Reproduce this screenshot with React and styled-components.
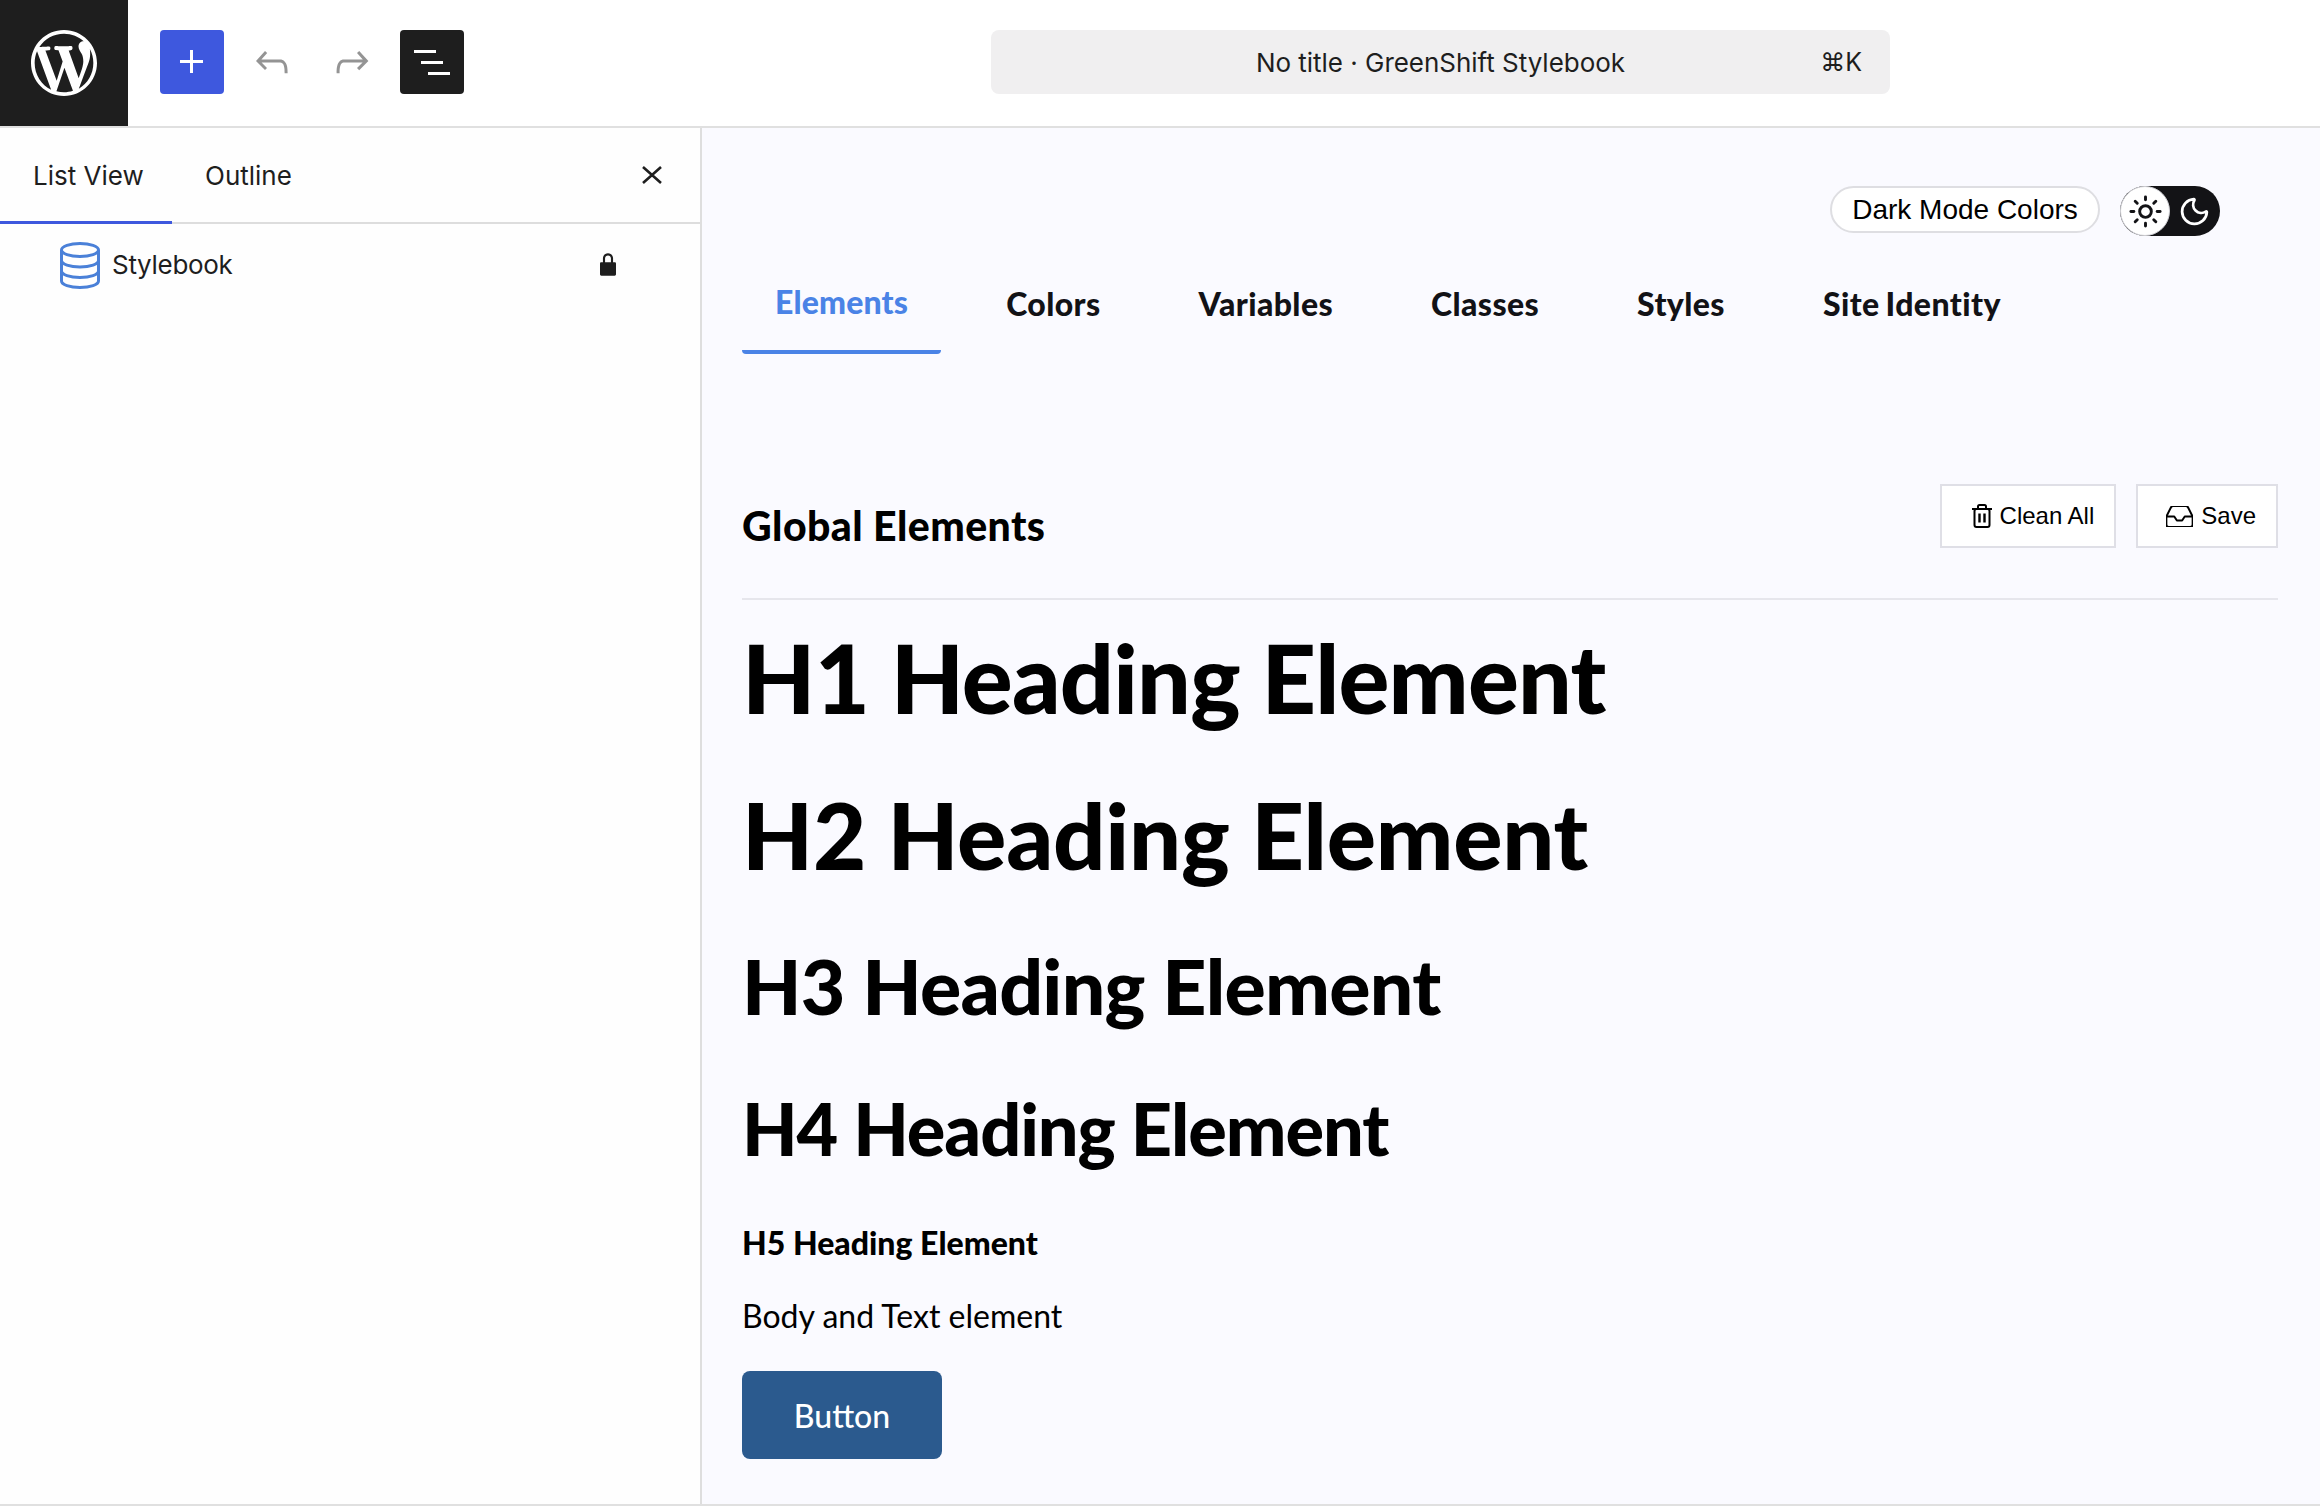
import styled, { createGlobalStyle } from 'styled-components';
import { Sun, Moon } from 'lucide-react';

const GlobalStyle = createGlobalStyle`
  * { box-sizing: border-box; }
  html, body { margin: 0; padding: 0; background: #fff; }
  body { font-family: Inter, "Liberation Sans", sans-serif; color: #1e1e1e; }
`

const Frame = styled.div`
  width: 2320px;
  height: 1508px;
  display: flex;
  flex-direction: column;
  overflow: hidden;
  background: #fff;
`

const TopBar = styled.header`
  height: 128px;
  flex: none;
  display: flex;
  align-items: flex-start;
  border-bottom: 2px solid #e0e0e0;
`

const LogoBox = styled.div`
  width: 128px;
  height: 126px;
  background: #1e1e1e;
  display: flex;
  align-items: center;
  justify-content: center;
  svg { display: block; }
`

const Tools = styled.div`
  display: flex;
  gap: 16px;
  padding: 30px 0 0 32px;
`

const ToolButton = styled.button`
  width: 64px;
  height: 64px;
  padding: 0;
  border: 0;
  border-radius: 4px;
  display: flex;
  align-items: center;
  justify-content: center;
  background: ${p => (p.$variant === 'blue' ? '#3e58de' : p.$variant === 'dark' ? '#1e1e1e' : 'transparent')};
  color: ${p => (p.$variant ? '#fff' : '#949494')};
`

const SearchBar = styled.div`
  position: relative;
  width: 899px;
  height: 64px;
  margin: 30px 0 0 527px;
  background: #f0eff0;
  border-radius: 8px;
  display: flex;
  align-items: center;
  justify-content: center;
  font-size: 26px;
  letter-spacing: -0.03px;
  color: #1e1e1e;
`

const Shortcut = styled.span`
  position: absolute;
  right: 28px;
  top: 50%;
  transform: translateY(-50%);
  font-size: 25px;
`

const Body = styled.div`
  height: 1378px;
  flex: none;
  display: flex;
  border-bottom: 2px solid #e0e0e0;
`

const Sidebar = styled.aside`
  width: 702px;
  flex: none;
  background: #fefefe;
  border-right: 2px solid #dedede;
`

const SideTabs = styled.div`
  height: 96px;
  display: flex;
  align-items: stretch;
  padding-right: 38px;
  border-bottom: 2px solid #dddddd;
`

const SideTab = styled.div`
  display: flex;
  align-items: center;
  padding: 2px 33px 0;
  width: ${p => (p.$active ? '172px' : 'auto')};
  margin-bottom: -2px;
  font-size: 26px;
  white-space: nowrap;
  color: #1e1e1e;
  border-bottom: 3px solid ${p => (p.$active ? '#3e58de' : 'transparent')};
`

const CloseButton = styled.div`
  margin: 0 0 1px auto;
  display: flex;
  align-items: center;
  color: #1e1e1e;
`

const TreeRow = styled.div`
  display: flex;
  align-items: center;
  gap: 12px;
  padding: 16px 76px 0 60px;
  font-size: 26px;
  letter-spacing: -0.3px;
  line-height: 50px;
  color: #1e1e1e;
`

const LockIcon = styled.svg`
  margin-left: auto;
  color: #1e1e1e;
`

const Main = styled.main`
  flex: 1;
  min-width: 0;
  background: #fafaff;
  padding: 58px 42px 0 40px;
`

const ModeRow = styled.div`
  display: flex;
  justify-content: flex-end;
  align-items: flex-start;
  gap: 20px;
  padding-right: 58px;
`

const ModePill = styled.div`
  width: 270px;
  height: 47px;
  border: 2px solid #dedee2;
  border-radius: 24px;
  background: #fff;
  display: flex;
  align-items: center;
  justify-content: center;
  font-family: "Liberation Sans", Arial, sans-serif;
  font-size: 28px;
  color: #000;
`

const ModeToggle = styled.div`
  position: relative;
  width: 100px;
  height: 50px;
  border-radius: 25px;
  background: #131316;
  display: flex;
  align-items: center;
  justify-content: flex-end;
  padding-right: 9px;
  color: #fff;
`

const ToggleKnob = styled.div`
  position: absolute;
  left: 0;
  top: 0;
  width: 50px;
  height: 50px;
  border-radius: 50%;
  background: #fff;
  border: 1px solid #cfcfd4;
  display: flex;
  align-items: center;
  justify-content: center;
  color: #131316;
`

const NavRow = styled.nav`
  display: flex;
  gap: 32px;
  margin-top: 43px;
  height: 75px;
  font-family: Lato, "Open Sans", sans-serif;
`

const NavItem = styled.div`
  padding: ${p => (p.$active ? '4px 33px 0' : '6px 33px 0')};
  height: 75px;
  font-size: 32px;
  line-height: 38px;
  font-weight: 900;
  letter-spacing: ${p => (p.$active ? '0.15px' : '0.4px')};
  word-spacing: -2px;
  color: ${p => (p.$active ? '#4a83e6' : '#121216')};
  border-bottom: 4px solid ${p => (p.$active ? '#4a83e6' : 'transparent')};
  border-radius: 0 0 4px 4px;
`

const SectionHead = styled.div`
  display: flex;
  justify-content: space-between;
  align-items: flex-start;
  margin-top: 130px;
  padding-bottom: 50px;
  border-bottom: 2px solid #e6e6ec;
`

const SectionTitle = styled.h2`
  margin: 18px 0 0;
  height: 46px;
  font-family: Lato, sans-serif;
  font-size: 41px;
  line-height: 48px;
  font-weight: 900;
  letter-spacing: 0.4px;
  color: #000;
`

const Actions = styled.div`
  display: flex;
  gap: 20px;
`

const ActionButton = styled.button`
  height: 64px;
  padding: 0 20px 0 ${p => p.$left}px;
  display: flex;
  align-items: center;
  gap: 8px;
  background: #fff;
  border: 2px solid #dfdfe6;
  font-family: "Liberation Sans", Arial, sans-serif;
  font-size: 24px;
  color: #000;
`

const H1 = styled.h1`
  margin: 20px 0 0;
  font-family: Lato, sans-serif;
  font-size: 95px;
  line-height: 114px;
  font-weight: 900;
  letter-spacing: -0.82px;
  color: #000;
`

const H2 = styled(H1).attrs({ as: 'h2' })`
  margin-top: 46px;
  font-size: 92px;
  line-height: 110px;
  letter-spacing: -0.25px;
`

const H3 = styled(H1).attrs({ as: 'h3' })`
  margin-top: 49px;
  font-size: 77px;
  line-height: 92px;
  letter-spacing: -0.74px;
`

const H4 = styled(H1).attrs({ as: 'h4' })`
  margin-top: 54px;
  font-size: 72px;
  line-height: 86px;
  letter-spacing: -1.07px;
`

const H5 = styled(H1).attrs({ as: 'h5' })`
  margin-top: 53px;
  font-size: 32px;
  line-height: 38px;
  letter-spacing: 0;
`

const BodyText = styled.p`
  margin: 35px 0 0;
  font-family: Lato, sans-serif;
  font-size: 32px;
  line-height: 38px;
  color: #000;
`

const PrimaryButton = styled.button`
  display: block;
  width: 200px;
  height: 88px;
  margin-top: 36px;
  padding: 0;
  border: 0;
  border-radius: 8px;
  background: #2b5a8e;
  color: #fff;
  font-family: Lato, sans-serif;
  font-size: 32px;
  font-weight: 500;
`

function WpLogo() {
  return (
    <svg width="66" height="66" viewBox="0 0 20 20" fill="#fff">
      <path d="M20 10c0-5.51-4.49-10-10-10C4.48 0 0 4.49 0 10c0 5.52 4.48 10 10 10 5.51 0 10-4.48 10-10zM7.78 15.37L4.37 6.22c.55-.02 1.17-.08 1.17-.08.5-.06.44-1.13-.06-1.11 0 0-1.45.11-2.37.11-.18 0-.37 0-.58-.01C4.12 2.69 6.87 1.11 10 1.11c2.33 0 4.45.87 6.05 2.34-.68-.11-1.65.39-1.65 1.58 0 .74.45 1.36.9 2.1.35.61.55 1.36.55 2.46 0 1.49-1.4 5-1.4 5l-3.03-8.37c.54-.02.82-.17.82-.17.5-.05.44-1.25-.06-1.22 0 0-1.44.12-2.38.12-.87 0-2.33-.12-2.33-.12-.5-.03-.56 1.2-.06 1.22l.92.08 1.26 3.41zM17.41 10c.24-.64.74-1.87.43-4.25.7 1.29 1.05 2.71 1.05 4.25 0 3.29-1.73 6.24-4.4 7.78.97-2.59 1.94-5.2 2.92-7.78zM6.1 18.09C3.12 16.65 1.11 13.53 1.11 10c0-1.3.23-2.48.72-3.59C3.25 10.3 4.67 14.2 6.1 18.09zm4.03-6.63l2.58 6.98c-.86.29-1.76.45-2.71.45-.79 0-1.57-.11-2.29-.33.81-2.38 1.62-4.74 2.42-7.1z" />
    </svg>
  );
}

function GbIcon({ d, size = 48 }) {
  return (
    <svg width={size} height={size} viewBox="0 0 24 24" fill="currentColor">
      <path d={d} />
    </svg>
  );
}

function CloseIcon() {
  return (
    <svg width="20" height="18" viewBox="0 0 20 18" fill="none" stroke="currentColor" strokeWidth="2.600">
      <path d="M1 1l18 16M19 1L1 17" />
    </svg>
  );
}

function DatabaseIcon() {
  return (
    <svg width="40" height="47" viewBox="0 0 40 47" fill="none" stroke="#4a80d8" strokeWidth="3">
      <ellipse cx="20" cy="8" rx="18.5" ry="6.5" />
      <path d="M1.5 8v31c0 3.6 8.3 6.5 18.5 6.5s18.500-2.900 18.500-6.500V8" />
      <path d="M1.500 18.500c0 3.600 8.300 6.500 18.500 6.500s18.500-2.900 18.500-6.500" />
      <path d="M1.500 29c0 3.600 8.300 6.500 18.500 6.500s18.500-2.900 18.500-6.500" />
    </svg>
  );
}

function TrashIcon() {
  return (
    <svg width="20" height="24" viewBox="0 0 20 24" fill="none" stroke="#000" strokeWidth="2">
      <path d="M0 5h20" />
      <path d="M6 5V2.500C6 1.700 6.700 1 7.500 1h5c.8 0 1.500.7 1.500 1.500V5" />
      <rect x="2.500" y="5" width="15" height="18" rx="2" />
      <path d="M7.500 9.500v9M12.500 9.500v9" strokeWidth="2.400" />
    </svg>
  );
}

function InboxIcon() {
  return (
    <svg width="27" height="21" viewBox="2 4 20 16" fill="none" stroke="#000" strokeWidth="1.500" strokeLinejoin="round" strokeLinecap="round">
      <path d="M22 12h-6l-2 3h-4l-2-3H2" />
      <path d="M5.450 5.110 2 12v6a2 2 0 0 0 2 2h16a2 2 0 0 0 2-2v-6l-3.450-6.890A2 2 0 0 0 16.760 4H7.240a2 2 0 0 0-1.790 1.110z" />
    </svg>
  );
}

const navItems = ['Colors', 'Variables', 'Classes', 'Styles', 'Site Identity'];

export default function App() {
  return (
    <Frame>
      <GlobalStyle />
      <TopBar>
        <LogoBox><WpLogo /></LogoBox>
        <Tools>
          <ToolButton $variant="blue"><GbIcon d="M11 12.5V17.500H12.500V12.500H17.500V11H12.500V6H11V11H6V12.500H11Z" /></ToolButton>
          <ToolButton><GbIcon d="M18.300 11.700c-.6-.6-1.400-.9-2.300-.9H6.700l2.900-3.300-1.100-1-4.500 5L8.500 16l1-1-2.700-2.700H16c.5 0 .9.2 1.300.5 1 1 1 3.400 1 4.500v.3h1.500v-.2c0-1.500 0-4.300-1.500-5.700z" /></ToolButton>
          <ToolButton><GbIcon d="M15.600 6.500l-1.100 1 2.900 3.300H8c-.9 0-1.700.3-2.300.9-1.400 1.500-1.400 4.200-1.400 5.700v.2h1.500v-.3c0-1.100 0-3.500 1-4.500.3-.3.7-.5 1.300-.5h9.200L14.500 15l1.100 1.100 4.600-4.600-4.600-5z" /></ToolButton>
          <ToolButton $variant="dark"><GbIcon d="M3 6h11v1.500H3V6Zm3.500 5.500h11V13h-11v-1.500ZM21 17H10v1.500h11V17Z" /></ToolButton>
        </Tools>
        <SearchBar>
          No title · GreenShift Stylebook
          <Shortcut>⌘K</Shortcut>
        </SearchBar>
      </TopBar>
      <Body>
        <Sidebar>
          <SideTabs>
            <SideTab $active>List View</SideTab>
            <SideTab>Outline</SideTab>
            <CloseButton><CloseIcon /></CloseButton>
          </SideTabs>
          <TreeRow>
            <DatabaseIcon />
            Stylebook
            <LockIcon width="32" height="32" viewBox="0 0 24 24" fill="currentColor">
              <path d="M17 10h-1.200V7c0-2.100-1.700-3.800-3.800-3.800-2.100 0-3.800 1.700-3.800 3.800v3H7c-.6 0-1 .4-1 1v8c0 .6.4 1 1 1h10c.6 0 1-.4 1-1v-8c0-.6-.4-1-1-1zM9.800 7c0-1.200 1-2.200 2.200-2.200 1.200 0 2.200 1 2.200 2.200v3H9.800V7z" />
            </LockIcon>
          </TreeRow>
        </Sidebar>
        <Main>
          <ModeRow>
            <ModePill>Dark Mode Colors</ModePill>
            <ModeToggle>
              <ToggleKnob><Sun size={35} strokeWidth={2} /></ToggleKnob>
              <Moon size={33} strokeWidth={2} />
            </ModeToggle>
          </ModeRow>
          <NavRow>
            <NavItem $active>Elements</NavItem>
            {navItems.map(item => <NavItem key={item}>{item}</NavItem>)}
          </NavRow>
          <SectionHead>
            <SectionTitle>Global Elements</SectionTitle>
            <Actions>
              <ActionButton $left={30}><TrashIcon />Clean All</ActionButton>
              <ActionButton $left={28}><InboxIcon />Save</ActionButton>
            </Actions>
          </SectionHead>
          <H1>H1 Heading Element</H1>
          <H2>H2 Heading Element</H2>
          <H3>H3 Heading Element</H3>
          <H4>H4 Heading Element</H4>
          <H5>H5 Heading Element</H5>
          <BodyText>Body and Text element</BodyText>
          <PrimaryButton>Button</PrimaryButton>
        </Main>
      </Body>
    </Frame>
  );
}
